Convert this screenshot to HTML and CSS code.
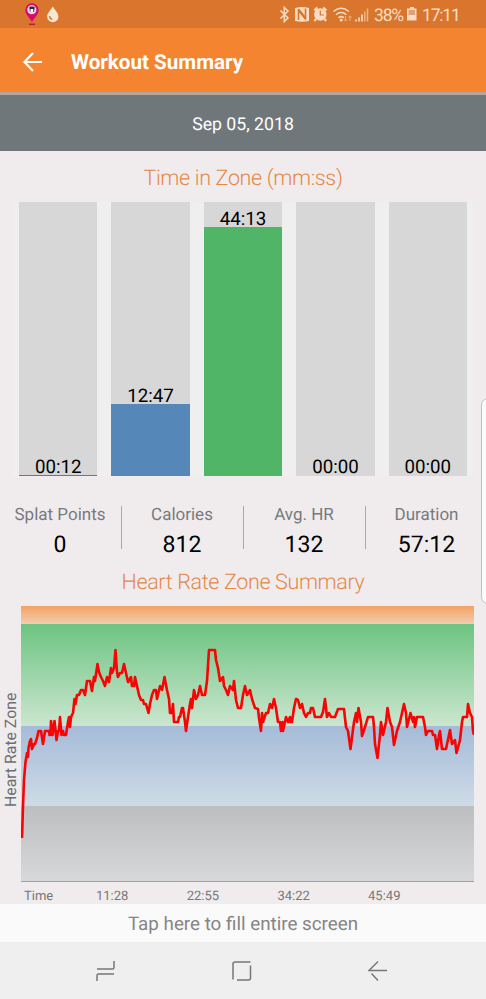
FILE: index.html
```
<!DOCTYPE html>
<html lang="en">
<head>
    <meta charset="UTF-8">
    <meta name="viewport" content="width=device-width, initial-scale=1.0">
    <title>Workout Summary</title>
    <link rel="stylesheet" href="styles.css">
</head>
<body>
    <div class="status-bar">
        <svg class="status-left" width="40" height="28" viewBox="22 0 40 28">
            <path d="M32 3.200a6.700 6.700 0 0 0-6.700 6.700c0 4.500 4.200 7.200 6.700 12.100 2.500-4.900 6.700-7.600 6.700-12.100A6.700 6.700 0 0 0 32 3.200z" fill="#d6086f"/>
            <circle cx="31.800" cy="9.700" r="4.600" fill="#e9d8e4"/>
            <path d="M29.300 7l1.700-.6h2l1.700.6-.7 5h-4z" fill="#3b2634"/>
            <path d="M30.500 9h2.700v3h-2.700z" fill="#fff"/>
            <path d="M29 24.300h6" stroke="#c01745" stroke-width="1.500"/>
            <path d="M52.800 6.500c-2 3.700-5.700 6.300-5.700 10a5.700 5.700 0 0 0 11.400 0c0-3.700-3.700-6.300-5.700-10z" fill="#fbe5d3"/>
            <path d="M49.500 16.200q.3 2.500 2.800 3.200" fill="none" stroke="#d9752c" stroke-width="1.500"/>
        </svg>
        <svg class="status-icons" width="94" height="28" viewBox="278 0 94 28">
            <path d="M280.500 10.500l7.500 7.500-3.700 3.500V7.500l3.700 3.500-7.500 7.500" fill="none" stroke="#fbdcc3" stroke-width="1.500"/>
            <path d="M295 8q7-2 14 0v13q-7 1.500-14 0z" fill="#fbdcc3"/>
            <path d="M298.500 20V10.500l7 8V8.500" fill="none" stroke="#d9752c" stroke-width="1.600"/>
            <path d="M298.500 9.500l7 9" stroke="#d9752c" stroke-width="2.200"/>
            <circle cx="320.300" cy="14.500" r="6.200" fill="#fbdcc3"/>
            <path d="M314.300 10.500l3-3M326.300 10.500l-3-3M316 19l-1.500 2M324.600 19l1.500 2" stroke="#fbdcc3" stroke-width="2.200"/>
            <path d="M320.300 10.500v4.500h3.500" fill="none" stroke="#d9752c" stroke-width="1.200"/>
            <g fill="none" stroke="#fbdcc3" stroke-width="1.500">
                <path d="M333.500 11.500q7.700-6.500 15.400 0M336 14.800q5.200-4.500 10.400 0M338.500 17.800q2.700-2.400 5.400 0"/>
            </g>
            <circle cx="341.200" cy="20" r="1.500" fill="#fbdcc3"/>
            <path d="M345.500 16v5M343.900 19.300l1.600 1.900 1.600-1.900M350 21v-5M348.400 17.700l1.600-1.900 1.600 1.900" fill="none" stroke="#efae7b" stroke-width="1"/>
            <path d="M356 21.500v-2M359 21.500v-4M362 21.500v-7" stroke="#fbdcc3" stroke-width="1.700"/>
            <path d="M364.800 21.500v-10M367.500 21.500v-13" stroke="#eeb588" stroke-width="1.500"/>
        </svg>
        <span class="battery-text">38%</span>
        <svg class="battery" width="10" height="14" viewBox="0 0 10 14">
            <path d="M3 0h4v1.500h2.500v12h-9.500v-12H3z" fill="#fbdcc3"/>
            <path d="M1.500 3h6.500v5H1.500z" fill="#d9a27a"/>
        </svg>
        <span class="clock">17:11</span>
    </div>

    <div class="app-bar">
        <svg class="back" width="20" height="20" viewBox="0 0 20 20">
            <path d="M19 10H1.500M10 1L1.500 10l8.500 9" fill="none" stroke="#fff" stroke-width="2.200"/>
        </svg>
        <h1>Workout Summary</h1>
    </div>
    <div class="date-bar">Sep 05, 2018</div>

    <div class="content">
        <h2 class="zone-title">Time in Zone (mm:ss)</h2>
        <div class="zones">
            <div class="zone">
                <span>00:12</span>
                <div class="fill gray" style="height: 1.500px"></div>
            </div>
            <div class="zone">
                <span>12:47</span>
                <div class="fill blue" style="height: 72px"></div>
            </div>
            <div class="zone">
                <span>44:13</span>
                <div class="fill green" style="height: 249px"></div>
            </div>
            <div class="zone empty"><span>00:00</span></div>
            <div class="zone empty"><span>00:00</span></div>
        </div>

        <div class="stats">
            <div class="stat"><label>Splat Points</label><b>0</b></div>
            <div class="stat"><label>Calories</label><b>812</b></div>
            <div class="stat"><label>Avg. HR</label><b>132</b></div>
            <div class="stat"><label>Duration</label><b>57:12</b></div>
        </div>

        <h2 class="chart-title">Heart Rate Zone Summary</h2>
        <div class="chart">
            <div class="y-label">Heart Rate Zone</div>
            <div class="plot">
                <div class="band band-orange"></div>
                <div class="band band-green"></div>
                <div class="band band-blue"></div>
                <div class="band band-gray"></div>
                <svg class="line" width="453" height="276" viewBox="21 606 453 276">
                    <polyline fill="none" stroke="#f80404" stroke-width="2.600" stroke-linejoin="round" points="
                        22,838 23,806 24,780 25.500,762 27,753 28,757 28.500,748 30,741 31,739 32,749 34,744 35,744 37,738
                        38.500,731 41,731 43,744 45,731 49,731 49.500,735 50.500,735 51,721 52.500,735 54.500,721 56.500,740
                        58,731 59,731 60,717 61.500,735 63,731 64,735 66,735 68,722 69,717 70,727 71,717 73,713 74.500,699
                        75.500,704 77,695 79,695 81,690 83,690 85,695 87,681 90,681 92,691 94,677 95,681 97.500,664 99,672
                        101,677 103,681 105,686 107,677 109,682 111,668 112,673 114,668 115.500,650 117,672 118,677
                        120,673 122,673 124,664 126,673 128,682 131,677 132,686 134,686 135,677 137,686 139,695 141,700
                        143,700 144,704 146,704 148.500,713 150,704 152,695 154,690 156,690 157,699 160,686 162,690
                        164.500,677 167,690 169,699 170,713 172,713 173,704 174,722 178,722 179,717 180,717 182,708
                        183,708 185,722 186,731 188,717 190,704 191,699 192,708 194,690 196,699 198,695 200,686 202,695
                        205,695 207,681 209,650 215,650 216,660 218,668 220,681 223,677 224,686 226,690 228,695 230,686
                        233,690 234,681 236,700 238,708 241,708 243,695 245,686 247,695 250,690 252,699 255,708 258,709
                        259,718 261,731 262,713 263,722 266,713 268,713 270,704 272,708 274,699 276,708 278,722 280,722
                        281,731 282.500,722 283,731 286,717 288,722 290,717 290.500,722 292,722 294,708 296,699 298,700
                        300,708 302,704 304,713 306,717 308,713 310,713 311,708 313,708 315,717 321,717 323,712 325,699
                        327,717 329,713 331,717 335,717 338,709 344,709 346,727 348,731 350.500,749 354,722 356,713
                        357,722 358.500,708 361,722 362,736 365,727 368,717 373,717 374,727 375,744 377.500,758 380,735
                        381,722 383,735 386,722 387.500,708 390,722 392,727 394,745 397,731 400,722 402,713 404,704
                        406,713 407,727 410.500,713 413,722 414,717 415,727 417,717 423,717 425,727 426,735 428,731
                        432,731 433,735 435,735 437,749 439,735 440,731 442,749 446,749 450,730 452,744 455,740
                        456.500,753 460,740 462,722 463,717 467,717 468,704 470,713 472,717 473,731 474,735"/>
                </svg>
            </div>
        </div>
        <div class="x-labels">
            <span>Time</span><span>11:28</span><span>22:55</span><span>34:22</span><span>45:49</span>
        </div>
    </div>

    <div class="tap-bar">Tap here to fill entire screen</div>
    <div class="nav-bar">
        <svg width="20" height="22" viewBox="0 0 20 22">
            <path d="M1 9h15.500q1.500 0 1.500-1.500V1M1 21v-5.500q0-1.500 1.500-1.500H18" fill="none" stroke="#777" stroke-width="1.500"/>
        </svg>
        <svg width="20" height="22" viewBox="0 0 20 22">
            <path d="M1 19.500V4q0-2 2-2h15.500M18.500 5.500V18q0 2-2 2H5" fill="none" stroke="#777" stroke-width="1.500"/>
        </svg>
        <svg width="20" height="22" viewBox="0 0 20 22">
            <path d="M10 1.500L1 10.500h18M3.500 13.500L10 20.500" fill="none" stroke="#777" stroke-width="1.500"/>
        </svg>
    </div>
    <div class="edge-handle"></div>
</body>
</html>
```

FILE: styles.css
```
* {
    box-sizing: border-box;
}
body {
    position: relative;
    width: 486px;
    height: 999px;
    margin: 0;
    overflow: hidden;
    font-family: Roboto, sans-serif;
    text-rendering: geometricPrecision;
    background-color: #f0eced;
}
svg {
    display: block;
    flex: none;
}
.status-bar {
    display: flex;
    align-items: center;
    height: 28px;
    padding-left: 22px;
    background-color: #d9752c;
    color: #fbdcc3;
    font-size: 17.500px;
    letter-spacing: -1.200px;
}
.status-icons {
    margin-left: 216px;
}
.battery-text {
    width: 33px;
    margin: 3px 0 0 2px;
}
.battery-text, .clock {
    white-space: nowrap;
}
.clock {
    margin: 3px 0 0 5px;
}
.app-bar {
    display: flex;
    align-items: center;
    height: 64px;
    padding: 4px 0 0 23px;
    background-color: #f48430;
}
h1 {
    margin: 2px 0 0 28px;
    color: #fff;
    font-size: 20.600px;
    font-weight: 700;
}
.date-bar {
    height: 59px;
    border-top: 3px solid #b5a698;
    background-color: #70777b;
    color: #fff;
    font-size: 17.700px;
    line-height: 60px;
    text-align: center;
}
h2 {
    margin: 0;
    color: #e2894a;
    font-size: 21.500px;
    font-weight: 300;
    letter-spacing: -0.350px;
    text-align: center;
}
.content {
    height: 753px;
}
.zone-title {
    height: 51px;
    line-height: 56px;
}
.zones {
    display: flex;
    gap: 14px;
    height: 274px;
    margin: 0 13px;
    padding: 0 6px;
    background-color: #efefef;
}
.zone {
    display: flex;
    flex: 1;
    flex-direction: column;
    justify-content: flex-end;
    background-color: #d7d7d7;
    font-size: 18.700px;
    line-height: 16px;
    text-align: center;
}
.zone.empty {
    line-height: 18px;
}
.gray {
    background-color: #70777b;
}
.blue {
    background-color: #5588b9;
}
.green {
    background-color: #50b566;
}
.stats {
    display: grid;
    grid-template-columns: repeat(4, 122px);
    grid-template-rows: 43px;
    margin: 30px 0 0 -0.500px;
}
.stat {
    display: flex;
    flex-direction: column;
    align-items: center;
    border-right: 1.500px solid #aaa8aa;
}
.stat:last-child {
    border: none;
}
.stat label {
    color: #777a7d;
    font-size: 17px;
    line-height: 19px;
}
.stat b {
    margin-top: 5px;
    color: #000;
    font-size: 23px;
    font-weight: 400;
    line-height: 29px;
}
.chart-title {
    height: 57px;
    line-height: 67px;
}
.chart {
    display: flex;
    height: 276px;
}
.y-label {
    width: 21px;
    padding: 75px 2px 0 0;
    color: #6c6f72;
    font-size: 15.800px;
    line-height: 17px;
    writing-mode: vertical-rl;
    transform: rotate(180deg);
}
.plot {
    position: relative;
    width: 453px;
    border-bottom: 1px solid #a3a0a4;
}
.line {
    position: absolute;
    top: 0;
    left: 0;
}
.band-orange {
    height: 18px;
    background: linear-gradient(#f3a261, #f1cdb2);
}
.band-green {
    height: 102px;
    background: linear-gradient(#6dc481, #cbe6cf);
}
.band-blue {
    height: 80px;
    background: linear-gradient(#a5bbd8, #cedbe7);
}
.band-gray {
    height: 75px;
    background: linear-gradient(#bcbec0, #d7d8da);
}
.x-labels {
    display: grid;
    grid-template-columns: 72px repeat(4, 90.700px);
    padding: 7px 0 0 24px;
    color: #777779;
    font-size: 13px;
    line-height: 16px;
}
.tap-bar {
    height: 38px;
    background-color: #fafafa;
    color: #858585;
    font-size: 18.800px;
    line-height: 40px;
    text-align: center;
}
.nav-bar {
    display: flex;
    align-items: center;
    justify-content: space-between;
    height: 57px;
    padding: 0 98px 0 96px;
    background-color: #efefef;
}
.edge-handle {
    position: absolute;
    top: 398px;
    right: -10px;
    width: 15px;
    height: 206px;
    border: 1px solid #c2c0c2;
    border-radius: 7px;
    background-color: #fbfbfb;
}
```
